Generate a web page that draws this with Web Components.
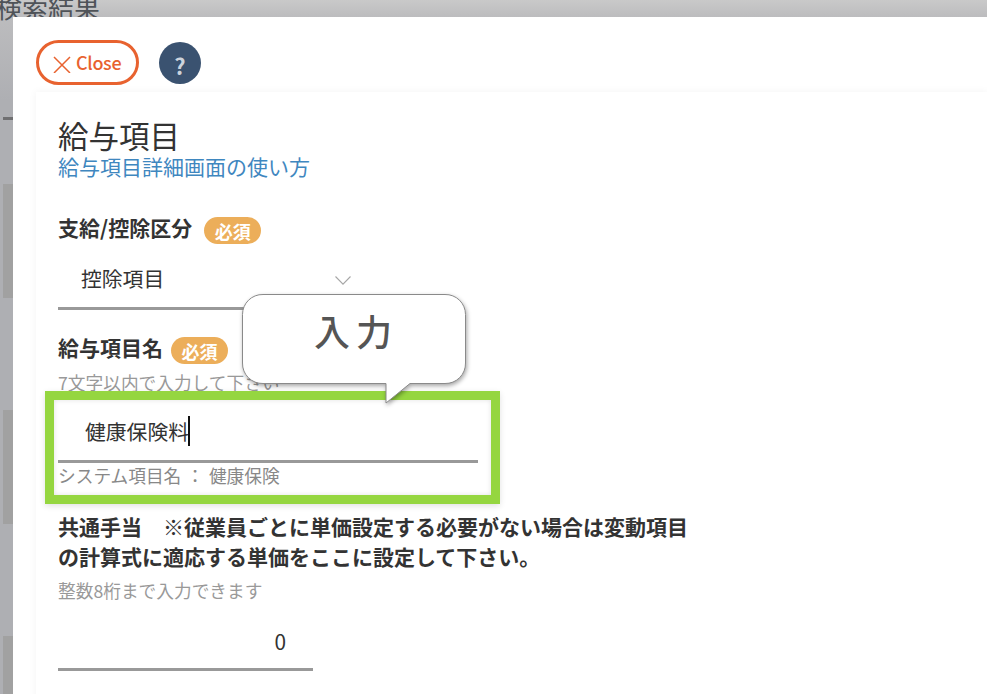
<!DOCTYPE html>
<html lang="ja">
<head>
<meta charset="utf-8">
<title>給与項目</title>
<style>
    html, body {
        margin: 0;
        height: 100%;
        overflow: hidden;
    }
    body {
        font-family: "Noto Sans CJK JP", "Noto Sans", sans-serif;
        color: #333;
    }
</style>
</head>
<body>

<pay-screen>
    <modal-sheet>
        <close-button slot="bar">Close</close-button>
        <help-button slot="bar"></help-button>
        <form-card>
            <h-title>給与項目</h-title>
            <help-link>給与項目詳細画面の使い方</help-link>

            <form-field required style="--top: 34px; --gap: 12px">
                <span slot="label">支給/控除区分</span>
                <select-input>控除項目</select-input>
            </form-field>

            <form-field required style="--top: 22px; --gap: 8px">
                <span slot="label">給与項目名</span>
                <span slot="hint">7文字以内で入力して下さい</span>
                <line-input caret style="--pad: 27px; --pad-top: 19px; --pad-bottom: 14px">健康保険料</line-input>
                <span slot="note">システム項目名 ： 健康保険</span>
                <highlight-box slot="over"></highlight-box>
                <note-bubble slot="over">入力</note-bubble>
            </form-field>

            <form-field style="--top: 24px; --hint-top: 4px">
                <span slot="label">共通手当　※従業員ごとに単価設定する必要がない場合は変動項目の計算式に適応する単価をここに設定して下さい。</span>
                <span slot="hint">整数8桁まで入力できます</span>
                <line-input number style="--width: 255px; --pad-top: 21px; --pad-bottom: 12px">0</line-input>
            </form-field>
        </form-card>
    </modal-sheet>
</pay-screen>

<script>
// small helper, every element is the same: a shadow root from a template..
const shadow = (el, css, html) => {
    const template = document.createElement('template')
    template.innerHTML = `<style>${css}</style>${html}`
    el.attachShadow({mode: 'open'}).appendChild(template.content)
}

customElements.define('pay-screen', class extends HTMLElement {
    connectedCallback() {
        shadow(this, /*css*/`
            :host {
                display: block;
                position: relative;
                height: 100vh;
                overflow: hidden;
                background: linear-gradient(#c9c9c9 0, #bcbcbe 17px, #aeafb3 100px);
            }
            h1 {
                margin: -6px 0 0 -4px;
                font-size: 26px;
                line-height: 26px;
                font-weight: 400;
                color: #4f5358;
            }
            .rule {
                margin: 97px 0 0 3px;
                height: 3px;
                background: #6f6f71;
            }
            .rows {
                display: flex;
                flex-direction: column;
                gap: 112px;
                margin: 64px 0 0 3px;
            }
            .rows div {
                height: 114px;
                background: #a1a1a1;
            }
        `, /*html*/`
            <h1>検索結果</h1>
            <div class="rule"></div>
            <div class="rows"><div></div><div></div><div></div></div>
            <slot></slot>
        `)
    }
})

customElements.define('modal-sheet', class extends HTMLElement {
    connectedCallback() {
        shadow(this, /*css*/`
            :host {
                display: block;
                position: absolute;
                left: 13px;
                top: 17px;
                right: 0;
                bottom: 0;
                background: #fff;
            }
            .bar {
                display: flex;
                align-items: center;
                gap: 20px;
                padding: 23px 0 0 23px;
            }
        `, /*html*/`
            <div class="bar"><slot name="bar"></slot></div>
            <slot></slot>
        `)
    }
})

customElements.define('close-button', class extends HTMLElement {
    connectedCallback() {
        shadow(this, /*css*/`
            :host {
                display: flex;
                align-items: center;
                box-sizing: border-box;
                width: 103px;
                height: 45px;
                padding-left: 14px;
                gap: 5px;
                border: 3px solid #e8622f;
                border-radius: 23px;
                color: #e8622f;
                font-size: 18px;
                font-weight: 500;
                letter-spacing: -0.3px;
            }
            svg {
                flex: none;
                margin-top: 3px;
            }
            span { margin-bottom: 2px; }
        `, /*html*/`
            <svg width="18" height="18" viewBox="0 0 18 18" fill="none" stroke="#e8622f" stroke-width="1.5">
                <path d="M1 2 L17 18 M17 2 L1 18"/>
            </svg>
            <span><slot></slot></span>
        `)
    }
})

customElements.define('help-button', class extends HTMLElement {
    connectedCallback() {
        shadow(this, /*css*/`
            :host {
                display: flex;
                align-items: center;
                justify-content: center;
                box-sizing: border-box;
                width: 42px;
                height: 42px;
                padding-top: 5px;
                border-radius: 50%;
                background: #3a5270;
                color: #ccd3dc;
                font-size: 22px;
                font-weight: 700;
                line-height: 1;
            }
        `, /*html*/`<span>?</span>`)
    }
})

customElements.define('form-card', class extends HTMLElement {
    connectedCallback() {
        shadow(this, /*css*/`
            :host {
                display: block;
                margin: 7px 0 0 23px;
                padding: 24px 0 0 22px;
                box-shadow: 0 0 8px rgba(0, 0, 0, .05);
                height: 600px;
            }
        `, `<slot></slot>`)
    }
})

customElements.define('h-title', class extends HTMLElement {
    connectedCallback() {
        shadow(this, /*css*/`
            :host {
                display: block;
                font-size: 30.5px;
                line-height: 38px;
                color: #333;
            }
        `, `<slot></slot>`)
    }
})

customElements.define('help-link', class extends HTMLElement {
    connectedCallback() {
        shadow(this, /*css*/`
            :host {
                display: block;
                font-size: 21px;
                line-height: 24px;
                color: #3f87bf;
            }
        `, `<slot></slot>`)
    }
})

customElements.define('form-field', class extends HTMLElement {
    connectedCallback() {
        const required = this.hasAttribute('required')
        shadow(this, /*css*/`
            :host {
                display: block;
                position: relative;
                margin-top: var(--top, 0);
            }
            .label {
                display: flex;
                align-items: flex-start;
                gap: var(--gap, 0);
                width: 632px;
                font-size: 21px;
                line-height: 30px;
                font-weight: 700;
                color: #333;
            }
            .req {
                flex: none;
                width: 57px;
                height: 27px;
                margin-top: 5px;
                border-radius: 14px;
                background: #ecae5a;
                color: #fff;
                font-size: 18px;
                line-height: 29px;
                font-weight: 700;
                text-align: center;
            }
            .hint {
                font-size: 17.7px;
                line-height: 30px;
                color: #999;
            }
            .note {
                font-size: 17.7px;
                line-height: 24px;
                word-spacing: 1px;
                color: #888;
            }
            ::slotted([slot="hint"]) {
                display: block;
                margin-top: var(--hint-top, 3px);
            }
        `, /*html*/`
            <div class="label">
                <div><slot name="label"></slot></div>
                ${required ? '<div class="req">必須</div>' : ''}
            </div>
            <div class="hint"><slot name="hint"></slot></div>
            <slot></slot>
            <div class="note"><slot name="note"></slot></div>
            <slot name="over"></slot>
        `)
    }
})

customElements.define('select-input', class extends HTMLElement {
    connectedCallback() {
        shadow(this, /*css*/`
            :host {
                display: block;
                position: relative;
                box-sizing: border-box;
                width: 255px;
                padding: 11px 0 6px 23px;
                border-bottom: 3px solid #999;
                font-size: 20.8px;
                line-height: 46px;
            }
            svg {
                position: absolute;
                left: 277px;
                top: 32px;
            }
        `, /*html*/`
            <slot></slot>
            <svg width="16" height="9" viewBox="0 0 16 9" fill="none" stroke="#a6a6a6" stroke-width="1.1">
                <path d="M.5 .5 L8 8.2 L15.5 .5"/>
            </svg>
        `)
    }
})

customElements.define('line-input', class extends HTMLElement {
    connectedCallback() {
        const number = this.hasAttribute('number')
        shadow(this, /*css*/`
            :host {
                display: block;
                box-sizing: border-box;
                width: var(--width, 420px);
                padding: var(--pad-top) 0 var(--pad-bottom) var(--pad, 0);
                border-bottom: 3px solid #999;
                font-size: 20.8px;
                line-height: 30px;
                color: #333;
            }
            .text {
                display: flex;
                align-items: center;
                height: 30px;
                ${number ? 'justify-content: flex-end; padding-right: 27px;' : ''}
            }
            .caret {
                width: 2px;
                height: 30px;
                margin-left: -1px;
                background: #111;
            }
        `, /*html*/`
            <div class="text">
                <slot></slot>
                ${this.hasAttribute('caret') ? '<span class="caret"></span>' : ''}
            </div>
        `)
    }
})

customElements.define('highlight-box', class extends HTMLElement {
    connectedCallback() {
        shadow(this, /*css*/`
            :host {
                display: block;
                position: absolute;
                left: -13px;
                bottom: -17px;
                box-sizing: border-box;
                width: 455px;
                height: 113px;
                border: 9px solid #95d640;
                box-shadow: 0 2px 6px rgba(0, 0, 0, .12), inset 0 0 5px rgba(0, 0, 0, .12);
            }
        `, ``)
    }
})

customElements.define('note-bubble', class extends HTMLElement {
    connectedCallback() {
        shadow(this, /*css*/`
            :host {
                display: flex;
                align-items: center;
                justify-content: center;
                position: absolute;
                left: 184px;
                top: -38px;
                width: 224px;
                height: 72px;
                font-size: 36px;
                font-weight: 500;
                letter-spacing: 6px;
                color: #555;
            }
            svg {
                position: absolute;
                left: 0;
                top: 0;
                overflow: visible;
                filter: drop-shadow(1px 2px 2px rgba(0, 0, 0, .35));
            }
            span {
                position: relative;
                padding-left: 4px;
            }
        `, /*html*/`
            <svg width="224" height="111" viewBox="0 0 224 111" fill="#fff" stroke="#8a8a8a">
                <path d="M21 .5 H203 A20 20 0 0 1 223.5 20.5 V69 A20 20 0 0 1 203 89.5 H168 L144 109 V89.5 H21 A20 20 0 0 1 .5 69 V20.5 A20 20 0 0 1 21 .5 Z"/>
            </svg>
            <span><slot></slot></span>
        `)
    }
})
</script>
</body>
</html>
